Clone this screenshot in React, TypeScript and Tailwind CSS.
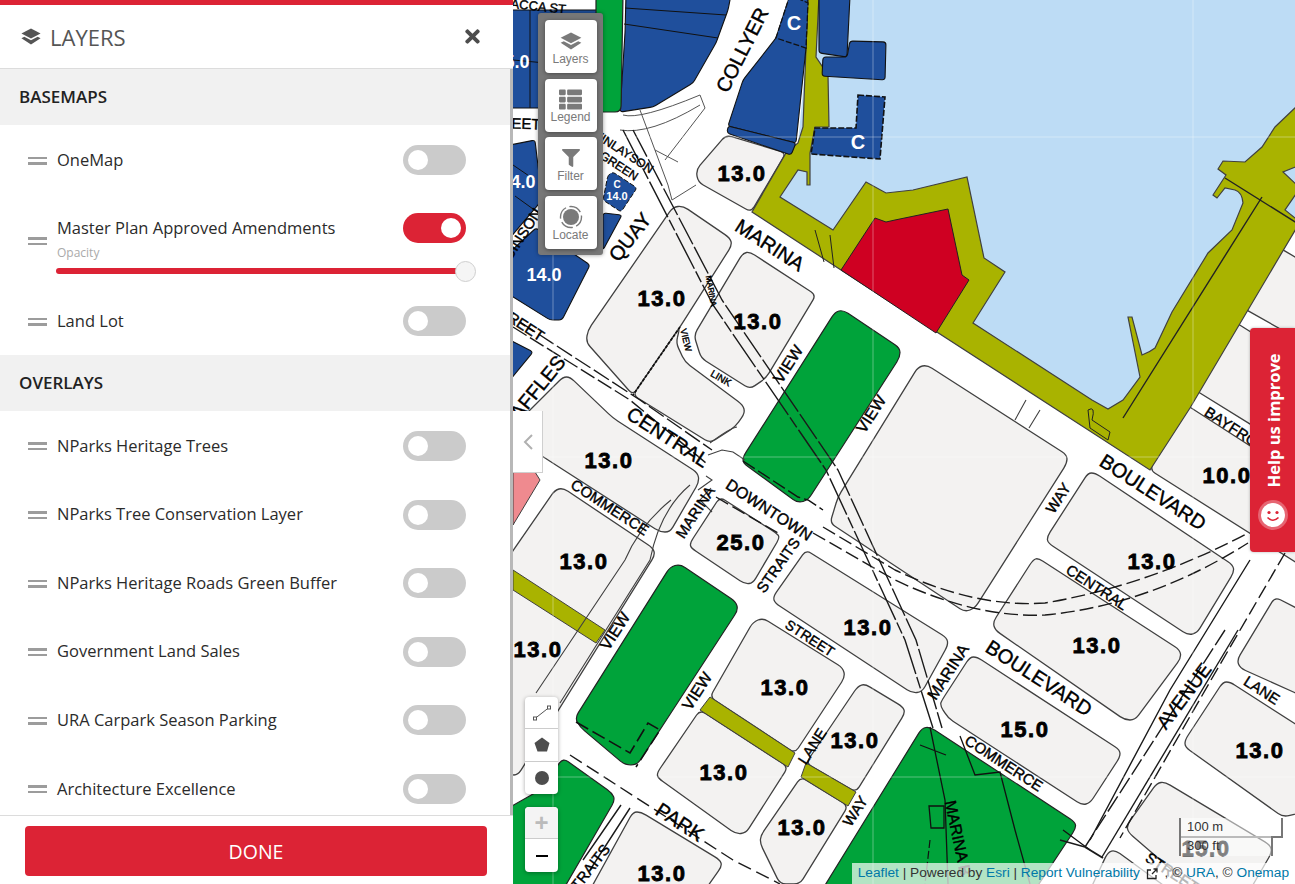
import React from "react";
import { FaThList, FaFilter, FaTimes } from "react-icons/fa";

type P = [number, number];

function rp(pts: P[], r = 4): string {
  const n = pts.length;
  let d = "";
  for (let i = 0; i < n; i++) {
    const p = pts[i];
    const a = pts[(i - 1 + n) % n];
    const b = pts[(i + 1) % n];
    const la = Math.hypot(a[0] - p[0], a[1] - p[1]) || 1;
    const lb = Math.hypot(b[0] - p[0], b[1] - p[1]) || 1;
    const ra = Math.min(r, la / 2);
    const rb = Math.min(r, lb / 2);
    const s: P = [p[0] + ((a[0] - p[0]) * ra) / la, p[1] + ((a[1] - p[1]) * ra) / la];
    const e: P = [p[0] + ((b[0] - p[0]) * rb) / lb, p[1] + ((b[1] - p[1]) * rb) / lb];
    d += `${i === 0 ? "M" : "L"}${s[0].toFixed(1)} ${s[1].toFixed(1)}Q${p[0]} ${p[1]} ${e[0].toFixed(1)} ${e[1].toFixed(1)}`;
  }
  return d + "Z";
}

const GREY = "#f3f2f1";
const GREEN = "#00a33a";
const BLUE = "#1f4f9c";
const OLIVE = "#a9b300";

const greys: P[][] = [
  [[786, 153], [726, 135], [696, 170], [698, 182], [751, 212]],
  [[673, 207], [683, 206], [730, 238], [732, 245], [680, 327], [633, 395], [586, 342], [588, 330]],
  [[633, 395], [680, 327], [676, 343], [685, 362], [743, 405], [745, 413], [735, 427], [710, 443]],
  [[750, 252], [816, 295], [766, 378], [750, 389], [701, 358], [694, 335], [743, 253]],
  [[918, 367], [927, 365], [1067, 455], [1067, 463], [975, 608], [965, 612], [830, 523], [838, 497]],
  [[563, 377], [570, 377], [613, 418], [698, 473], [699, 482], [670, 532], [660, 532], [545, 458], [510, 436], [510, 430]],
  [[555, 490], [563, 488], [653, 548], [655, 555], [518, 775], [510, 775], [510, 555]],
  [[720, 497], [776, 533], [780, 537], [753, 583], [745, 584], [691, 548], [690, 543]],
  [[753, 622], [763, 618], [843, 668], [845, 677], [795, 753], [710, 697]],
  [[700, 710], [788, 767], [746, 833], [736, 834], [658, 778], [657, 773]],
  [[858, 686], [865, 684], [903, 707], [905, 713], [856, 792], [806, 763]],
  [[801, 777], [848, 806], [800, 884], [780, 884], [760, 843], [761, 835]],
  [[806, 550], [947, 638], [948, 645], [922, 692], [912, 693], [775, 603], [773, 597]],
  [[970, 657], [977, 657], [1120, 750], [1120, 757], [1090, 803], [1082, 805], [948, 718], [940, 705], [942, 700]],
  [[1033, 560], [1038, 558], [1180, 650], [1181, 658], [1135, 720], [1125, 720], [995, 630], [993, 622]],
  [[1088, 473], [1095, 473], [1233, 565], [1234, 572], [1197, 633], [1188, 635], [1048, 543], [1047, 537]],
  [[1182, 402], [1300, 478], [1300, 565], [1150, 470]],
  [[1280, 248], [1300, 260], [1300, 340], [1243, 308]],
  [[1235, 322], [1300, 363], [1300, 455], [1192, 388]],
  [[1223, 682], [1230, 682], [1300, 727], [1300, 813], [1283, 817], [1185, 747], [1185, 740]],
  [[1275, 597], [1300, 610], [1300, 695], [1240, 668], [1237, 660]],
  [[1157, 783], [1165, 782], [1270, 845], [1272, 852], [1250, 890], [1195, 890], [1128, 832], [1127, 825]],
  [[1108, 852], [1115, 850], [1170, 890], [1090, 890]],
  [[633, 812], [641, 812], [720, 860], [722, 866], [705, 890], [590, 890]],
];

const greens: P[][] = [
  [[835, 312], [843, 310], [900, 348], [900, 357], [808, 500], [798, 503], [743, 463], [743, 457]],
  [[670, 567], [680, 564], [736, 602], [738, 610], [637, 765], [625, 765], [580, 727], [575, 718]],
  [[563, 758], [612, 793], [615, 800], [563, 890], [505, 890], [505, 810], [540, 790]],
  [[922, 728], [930, 727], [1075, 822], [1076, 828], [1035, 890], [822, 890]],
  [[596, -5], [623, -5], [621, 112], [596, 112]],
];

const blues: P[][] = [
  [[626, -5], [731, -5], [728, 10], [716, 43], [693, 83], [653, 107], [620, 112], [625, 33]],
  [[790, -5], [808, -5], [806, 48], [796, 143], [728, 126], [743, 80], [776, 38]],
  [[728, 126], [796, 143], [791, 155], [727, 133]],
  [[819, -5], [850, -5], [847, 57], [819, 53]],
  [[850, 41], [886, 42], [885, 80], [822, 76], [823, 57], [847, 57]],
  [[510, 10], [600, 10], [600, 108], [510, 108]],
  [[510, 145], [535, 140], [542, 200], [510, 238]],
  [[510, 252], [536, 228], [590, 265], [562, 320], [550, 320], [510, 295]],
  [[603, 213], [622, 215], [603, 250]],
  [[510, 340], [533, 352], [510, 380]],
];

const cap = (x: number, y: number, r: number, s: string, size: number) => ({ x, y, r, s, size });
const labels = [
  cap(742, 50, -63, "COLLYER", 20),
  cap(630, 237, -52, "QUAY", 20),
  cap(770, 245, 33, "MARINA", 20),
  cap(1153, 492, 33, "BOULEVARD", 20),
  cap(1039, 678, 33, "BOULEVARD", 20),
  cap(1184, 696, -53, "AVENUE", 19),
  cap(668, 437, 33, "CENTRAL", 20),
  cap(1097, 587, 33, "CENTRAL", 15),
  cap(610, 507, 33, "COMMERCE", 15),
  cap(1004, 763, 33, "COMMERCE", 15),
  cap(769, 510, 33, "DOWNTOWN", 16),
  cap(695, 512, -57, "MARINA", 15),
  cap(778, 565, -55, "STRAITS", 15),
  cap(810, 638, 33, "STREET", 14),
  cap(788, 364, -57, "VIEW", 16),
  cap(871, 414, -57, "VIEW", 16),
  cap(615, 631, -57, "VIEW", 16),
  cap(697, 691, -57, "VIEW", 16),
  cap(812, 746, -57, "LANE", 15),
  cap(1262, 690, 33, "LANE", 15),
  cap(855, 811, -57, "WAY", 15),
  cap(1058, 498, -57, "WAY", 15),
  cap(680, 822, 33, "PARK", 20),
  cap(948, 672, -57, "MARINA", 16),
  cap(958, 838, 78, "MARINA B", 16),
  cap(1240, 432, 33, "BAYFRONT", 15),
  cap(686, 340, 76, "VIEW", 9),
  cap(721, 378, 30, "LINK", 10),
  cap(711, 291, 80, "MARINA", 8),
  cap(624, 152, 33, "FINLAYSON", 12),
  cap(619, 166, 33, "GREEN", 12),
  cap(533, 393, -51, "RAFFLES", 20),
  cap(518, 321, 33, "STREET", 15),
  cap(525, 5, 6, "MALACCA ST", 13),
  cap(511, 123, 2, "STREET", 15),
  cap(516, 243, -57, "ROBINSON", 15),
  cap(587, 871, -52, "STRAITS", 15),
  cap(1172, 872, 33, "STREET", 15),
];

const nums: [number, number, string][] = [
  [742, 173, "13.0"], [662, 298, "13.0"], [758, 321, "13.0"], [609, 460, "13.0"],
  [584, 561, "13.0"], [538, 649, "13.0"], [741, 542, "25.0"], [868, 627, "13.0"],
  [785, 687, "13.0"], [855, 740, "13.0"], [724, 772, "13.0"], [802, 827, "13.0"],
  [662, 873, "13.0"], [1025, 729, "15.0"], [1097, 645, "13.0"], [1152, 561, "13.0"],
  [1227, 475, "10.0"], [1260, 750, "13.0"], [1206, 848, "15.0"],
];

function MapCanvas() {
  const stroke = "#404040";
  return (
    <svg className="absolute inset-0 h-full w-full bg-white" viewBox="513 0 782 884">
      <path d="M812 -5H1300V210L1150 470L841 270L780 197L798 143Z" fill="#bddcf5" />
      {greys.map((p, i) => (
        <path key={i} d={rp(p, 6)} fill={GREY} stroke={stroke} strokeWidth={1.3} />
      ))}
      <path d="M513 472H535L540 480L513 525Z" fill="#ef8a8f" stroke={stroke} strokeWidth={1} />
      <path d="M513 570L605 630L596 643L513 590Z" fill={OLIVE} stroke={stroke} strokeWidth={1} />
      <path d="M710 697L795 753L788 767L700 710Z" fill={OLIVE} stroke={stroke} strokeWidth={1} />
      <path d="M806 763L856 792L848 806L801 777Z" fill={OLIVE} stroke={stroke} strokeWidth={1} />
      <path
        d="M808 -5H819L816 57L828 75L829 127H815L810 153V185H807V172L798 170L780 197L833 230L866 182L886 193L913 190L967 177L984 258L1005 272L973 323L1092 400L1108 409L1123 400L1140 377L1128 317H1132L1142 355Q1150 352 1155 348L1172 312L1208 253L1232 230L1243 203Q1242 192 1235 190L1225 188L1217 198L1213 195L1226 175L1218 169L1223 161L1245 162L1262 147L1275 127L1300 103V165L1283 172L1300 188L1285 210L1300 222L1190 408L1150 470L841 270L752 212L786 153L798 143L803 127Z"
        fill={OLIVE}
        stroke={stroke}
        strokeWidth={1.2}
      />
      <path d="M1123 418L1262 197M1225 178L1300 225" fill="none" stroke="#222" strokeWidth={1.4} />
      <path d="M1088 410Q1096 405 1092 420L1110 432L1108 440L1090 428Z" fill="none" stroke="#222" strokeWidth={1} />
      <path d="M841 270L875 218L886 222L895 220L948 209L962 275L969 280L936 333Z" fill="#cf0022" stroke="#222" strokeWidth={1} />
      <path d="M815 230L824 262M830 235L834 268" fill="none" stroke="#222" strokeWidth={1} />
      {blues.map((p, i) => (
        <path key={i} d={rp(p, 3)} fill={BLUE} stroke="#111" strokeWidth={1.1} />
      ))}
      <path d={rp([[608, 175], [613, 172], [637, 188], [621, 212], [603, 200]], 3)} fill={BLUE} stroke="#111" strokeWidth={1} strokeDasharray="5 2" />
      <path d="M790 -5L808 3L806 48L776 38Z" fill={BLUE} stroke="#111" strokeWidth={1.3} strokeDasharray="6 2" />
      <path d="M858 95L885 97L880 159L811 154L815 128L856 128Z" fill={BLUE} stroke="#111" strokeWidth={1.6} strokeDasharray="6 2" />
      {greens.map((p, i) => (
        <path key={i} d={rp(p, 6)} fill={GREEN} stroke="#222" strokeWidth={1.2} />
      ))}
      <path d="M625 8L726 15M624 24L718 38M530 10V108M560 60V108M513 60L600 68" fill="none" stroke="#111" strokeWidth={1} />
      <path d="M515 196L540 214M513 165L535 180" fill="none" stroke="#111" strokeWidth={1} />
      <path d="M576 722L630 753L648 723L660 730L636 767" fill="none" stroke="#111" strokeWidth={1.6} strokeDasharray="14 5" />
      <path d="M930 727L945 800L948 884M920 745L946 755M960 736L975 775L1000 772L1015 830L1030 884M1063 830L1090 850" fill="none" stroke="#111" strokeWidth={1.3} />
      <path d="M929 806H944V828H931Z" fill="none" stroke="#111" strokeWidth={1.3} />
      <path d="M930 840L925 884" fill="none" stroke="#111" strokeWidth={1.2} strokeDasharray="8 3" />
      <path d="M743 461L798 497L808 500L823 510" fill="none" stroke="#111" strokeWidth={1.4} strokeDasharray="14 4" />
      <path d="M680 327L633 395" fill="none" stroke="#111" strokeWidth={1.7} strokeDasharray="3 1.5" />
      <path d="M671 500Q640 525 625 560L536 693M690 485Q660 510 650 560L560 703M710 443Q730 428 737 427" fill="none" stroke={stroke} strokeWidth={1.1} />
      <path d="M708 455L722 450L733 452L745 460M698 490L712 480L706 476M711 488L700 500L712 512" fill="none" stroke={stroke} strokeWidth={1.1} />
      <path d="M1026 400L1015 420M1040 410L1029 428" fill="none" stroke={stroke} strokeWidth={1.1} />
      <path d="M623 115Q640 120 700 95L705 108L665 160M620 130Q650 135 700 105M640 110L668 185L672 200L696 185M655 150L678 162" fill="none" stroke="#555" strokeWidth={1} />
      <g fill="none" stroke="#1a1a1a" strokeWidth={1.4}>
        <path d="M623 130L713 305L826 470L905 640L933 728" strokeDasharray="40 3 12 3" />
        <path d="M633 130L722 300L838 470L916 640L942 728" strokeDasharray="30 3" />
        <path d="M513 327L630 400L706 463" strokeDasharray="16 4" />
        <path d="M520 322L640 400L712 450" strokeDasharray="18 4" />
        <path d="M716 497L778 533" strokeDasharray="14 5" />
        <path d="M813 533L895 580Q975 618 1045 615Q1150 605 1248 543" strokeDasharray="14 5" />
        <path d="M823 527L895 570Q975 608 1045 603Q1150 585 1248 533" strokeDasharray="14 5" />
        <path d="M1238 630L1102 857" />
        <path d="M1225 630L1085 847" strokeDasharray="18 4" />
        <path d="M1285 553L1211 680L1120 838" strokeDasharray="14 5" />
        <path d="M1250 560L1170 690L1090 840" />
        <path d="M570 755L733 860L780 884" strokeDasharray="14 6" />
        <path d="M621 805L583 860M630 808L590 870" />
        <path d="M1085 847L1103 858" strokeWidth={2} />
        <path d="M1060 840L1085 847" />
      </g>
      <path d="M553 0V884M873 0V884M1193 0V884M513 137H1295M513 457H1295M513 777H1295" fill="none" stroke="#fff" strokeOpacity={0.35} strokeWidth={1} />
      {labels.map((l, i) => (
        <text
          key={i}
          transform={`translate(${l.x} ${l.y}) rotate(${l.r})`}
          textAnchor="middle"
          dominantBaseline="central"
          fontFamily="'Liberation Sans', Arial, sans-serif"
          fontSize={l.size}
          fill="#000"
          stroke="#000"
          strokeWidth={0.4}
        >
          {l.s}
        </text>
      ))}
      {nums.map(([x, y, s], i) => (
        <text
          key={i}
          x={x}
          y={y}
          textAnchor="middle"
          dominantBaseline="central"
          fontFamily="'Liberation Sans', Arial, sans-serif"
          fontWeight={700}
          fontSize={22}
          letterSpacing={1.5}
          fill="#000"
          stroke="#000"
          strokeWidth={0.8}
        >
          {s}
        </text>
      ))}
      {[
        [794, 23, "C", 20],
        [858, 142, "C", 20],
        [544, 275, "14.0", 18],
        [617, 184, "C", 10],
        [617, 196, "14.0", 11],
        [523, 182, "4.0", 18],
        [517, 62, "5.0", 18],
      ].map(([x, y, s, z], i) => (
        <text
          key={i}
          x={x as number}
          y={y as number}
          textAnchor="middle"
          dominantBaseline="central"
          fontFamily="'Liberation Sans', Arial, sans-serif"
          fontWeight={700}
          fontSize={z as number}
          fill="#fff"
        >
          {s}
        </text>
      ))}
    </svg>
  );
}

function LayersIcon({ w, h, color }: { w: number; h: number; color: string }) {
  return (
    <svg width={w} height={h} viewBox="0 0 24 20">
      <path d="M12 0.5L23.5 6.5L12 12.5L0.5 6.5Z" fill={color} />
      <path d="M0.5 12L4 10.2L12 14.4L20 10.2L23.5 12L12 19.5Z" fill={color} />
    </svg>
  );
}

function Toggle({ on = false }: { on?: boolean }) {
  return (
    <div
      className={`flex h-[30px] w-[63px] shrink-0 items-center rounded-full px-[5px] ${
        on ? "justify-end bg-[#dc2335]" : "justify-start bg-[#cbcbcb]"
      }`}
    >
      <div className="h-[20px] w-[20px] rounded-full bg-white" />
    </div>
  );
}

function Handle() {
  return (
    <div className="mt-[1px] flex w-[19px] shrink-0 flex-col gap-[3px]">
      <div className="h-[2.5px] bg-[#9c9c9c]" />
      <div className="h-[2.5px] bg-[#9c9c9c]" />
    </div>
  );
}

function Row({ label, h = "h-[68.6px]" }: { label: string; h?: string }) {
  return (
    <div className={`flex shrink-0 items-center pl-[28px] pr-[44px] ${h}`}>
      <Handle />
      <span className="ml-[10px] flex-1 text-[16.5px] text-[#2b2b2b]">{label}</span>
      <Toggle />
    </div>
  );
}

function Section({ label }: { label: string }) {
  return (
    <div className="flex h-[56px] shrink-0 items-center bg-[#f1f1f1] pl-[19px] text-[17px] font-semibold text-[#222]">
      {label}
    </div>
  );
}

function ToolButton({ label, icon }: { label: string; icon: React.ReactNode }) {
  return (
    <div className="flex h-[53px] w-[52px] flex-col items-center rounded-[4px] bg-white pt-[10px] text-[12px] leading-[14px] text-[#7a7a7a] shadow-[0_1px_4px_rgba(0,0,0,0.4)] font-['Liberation_Sans',sans-serif]">
      <div className="flex h-[21px] items-center justify-center">{icon}</div>
      <span className="mt-[0.5px]">{label}</span>
    </div>
  );
}

export default function App() {
  return (
    <div className="flex h-[884px] w-[1295px] overflow-hidden bg-white font-['Open_Sans',sans-serif]">
      <aside className="flex h-full w-[513px] shrink-0 flex-col bg-white">
        <div className="h-[5px] shrink-0 bg-[#dc2335]" />
        <header className="flex h-[64px] shrink-0 items-center justify-between border-b border-[#dcdcdc] pl-[21px] pr-[30px]">
          <div className="flex items-center gap-[9px] text-[#555]">
            <LayersIcon w={20} h={17} color="#555" />
            <span className="mt-[1px] text-[22px] leading-[30px]">LAYERS</span>
          </div>
          <FaTimes size={21} className="text-[#4d4d4d]" />
        </header>
        <div className="flex min-h-0 flex-1 border-r-[3px] border-[#b8b8b8]">
          <div className="flex min-w-0 flex-1 flex-col overflow-hidden">
            <Section label="BASEMAPS" />
            <Row label="OneMap" h="h-[70px]" />
            <div className="relative h-[92px] shrink-0 pl-[28px] pr-[44px]">
              <div className="flex h-[91px] items-center">
                <Handle />
                <div className="ml-[10px] mt-[18px] flex h-[30px] flex-1 items-center self-start">
                  <span className="flex-1 text-[16.5px] text-[#2b2b2b]">Master Plan Approved Amendments</span>
                  <Toggle on />
                </div>
              </div>
              <div className="absolute left-[57px] top-[51px] text-[12px] leading-[14px] text-[#aaa]">Opacity</div>
              <div className="absolute left-[56px] top-[73px] h-[6px] w-[409px] rounded-full bg-[#dc2335]" />
              <div className="absolute left-[455px] top-[66px] h-[21px] w-[21px] rounded-full border border-[#cfcfcf] bg-[#f5f5f5]" />
            </div>
            <Row label="Land Lot" h="h-[68px]" />
            <Section label="OVERLAYS" />
            <div className="h-[0.7px] shrink-0" />
            <Row label="NParks Heritage Trees" />
            <Row label="NParks Tree Conservation Layer" />
            <Row label="NParks Heritage Roads Green Buffer" />
            <Row label="Government Land Sales" />
            <Row label="URA Carpark Season Parking" />
            <Row label="Architecture Excellence" />
          </div>
        </div>
        <footer className="flex h-[69px] shrink-0 items-start border-t border-[#dcdcdc] px-[25px] pt-[10px]">
          <div className="flex h-[50px] w-[462px] items-center justify-center rounded-[4px] bg-[#dc2335] pt-[1px] text-[19.5px] text-white">
            DONE
          </div>
        </footer>
      </aside>

      <main className="relative h-full min-w-0 flex-1 overflow-hidden">
        <MapCanvas />

        <div className="absolute left-[25px] top-[13px] flex w-[65px] flex-col items-center gap-[5.7px] rounded-[3px] bg-[#777] pb-[6px] pt-[7px] shadow-[0_0_4px_rgba(0,0,0,0.4)]">
          <ToolButton label="Layers" icon={<LayersIcon w={22} h={18} color="#7a7a7a" />} />
          <ToolButton label="Legend" icon={<FaThList size={23} />} />
          <ToolButton label="Filter" icon={<FaFilter size={18} />} />
          <ToolButton
            label="Locate"
            icon={
              <svg width="24" height="24" viewBox="0 0 24 24">
                <circle cx="12" cy="12" r="8" fill="#7a7a7a" />
                <circle cx="12" cy="12" r="10.5" fill="none" stroke="#7a7a7a" strokeWidth="1.4" strokeDasharray="13 3.5" strokeDashoffset="2" />
              </svg>
            }
          />
        </div>

        <div className="absolute left-0 top-[411px] flex h-[62px] w-[30px] items-center justify-center border-b border-r border-[#cfcfcf] bg-white">
          <svg width="14" height="18" viewBox="0 0 14 18">
            <path d="M11 2L4 9L11 16" fill="none" stroke="#b0b0b0" strokeWidth="2" />
          </svg>
        </div>

        <div className="absolute left-[12px] top-[697px] flex w-[33px] flex-col overflow-hidden rounded-[4px] bg-white shadow-[0_1px_4px_rgba(0,0,0,0.35)]">
          <div className="flex h-[32px] items-center justify-center border-b border-[#ccc]">
            <svg width="20" height="20" viewBox="0 0 20 20">
              <path d="M3 15.5L17 4.5" stroke="#555" strokeWidth="1" />
              <rect x="1.5" y="14" width="3" height="3" fill="#fff" stroke="#555" />
              <rect x="15.5" y="3" width="3" height="3" fill="#fff" stroke="#555" />
            </svg>
          </div>
          <div className="flex h-[33px] items-center justify-center border-b border-[#ccc]">
            <svg width="18" height="18" viewBox="0 0 18 18">
              <path d="M9 1.5L16.5 7L14 15.5H4.5L1.5 7Z" fill="#4d4d4d" />
            </svg>
          </div>
          <div className="flex h-[32px] items-center justify-center">
            <div className="h-[14px] w-[14px] rounded-full bg-[#4d4d4d]" />
          </div>
        </div>

        <div className="absolute left-[12px] top-[807px] flex w-[33px] flex-col overflow-hidden rounded-[4px] bg-white font-['Liberation_Sans',sans-serif] shadow-[0_1px_4px_rgba(0,0,0,0.35)]">
          <div className="flex h-[32px] items-center justify-center border-b border-[#ccc] bg-[#f4f4f4] text-[24px] font-bold leading-none text-[#bbb]">
            +
          </div>
          <div className="flex h-[33px] items-center justify-center">
            <div className="h-[2px] w-[12px] bg-black" />
          </div>
        </div>

        <div className="absolute left-[666px] top-[818px] flex flex-col font-['Liberation_Sans',sans-serif] text-[13px] leading-[16px] text-[#333]">
          <div className="h-[20px] w-[104px] border-x-2 border-b-2 border-[#777] bg-white/50 pl-[6px] pt-[1px]">100 m</div>
          <div className="-mt-[2px] h-[20px] w-[94px] border-x-2 border-t-0 border-[#777] bg-white/50 pl-[6px] pt-[2px]">300 ft</div>
        </div>

        <div className="absolute bottom-0 right-0 flex h-[21px] items-center whitespace-pre bg-white/70 pl-[6px] pr-[6px] font-['Liberation_Sans',sans-serif] text-[13.7px] text-[#333]">
          <span className="text-[#0078a8]">Leaflet</span>
          <span> | Powered by </span>
          <span className="text-[#0078a8]">Esri</span>
          <span> | </span>
          <span className="text-[#0078a8]">Report Vulnerability</span>
          <svg className="ml-[6px] mr-[3px]" width="12" height="12" viewBox="0 0 12 12">
            <path d="M5 2H1.5V10.5H10V7M6 6L11 1M7.5 1H11V4.5" fill="none" stroke="#222" strokeWidth="1.3" />
          </svg>
          <span> , © </span>
          <span className="text-[#0078a8]">URA</span>
          <span>, © </span>
          <span className="text-[#0078a8]">Onemap</span>
        </div>

        <div className="absolute right-0 top-[328px] flex h-[224px] w-[45px] flex-col items-center rounded-l-[4px] bg-[#dc2335] shadow-[0_0_3px_rgba(0,0,0,0.3)]">
          <div className="ml-[3px] mt-[25px] flex h-[134px] items-center justify-center">
            <span className="-rotate-90 whitespace-nowrap text-[16.5px] font-bold text-white">Help us improve</span>
          </div>
          <div className="mt-[13px] flex h-[30px] w-[30px] items-center justify-center rounded-full bg-white/30">
            <svg width="24" height="24" viewBox="0 0 24 24">
              <circle cx="12" cy="12" r="12" fill="#fff" />
              <circle cx="8" cy="9.5" r="1.6" fill="#dc2335" />
              <circle cx="16" cy="9.5" r="1.6" fill="#dc2335" />
              <path d="M6.5 14.5Q12 20 17.5 14.5" fill="none" stroke="#dc2335" strokeWidth="1.6" />
            </svg>
          </div>
        </div>
      </main>
    </div>
  );
}
